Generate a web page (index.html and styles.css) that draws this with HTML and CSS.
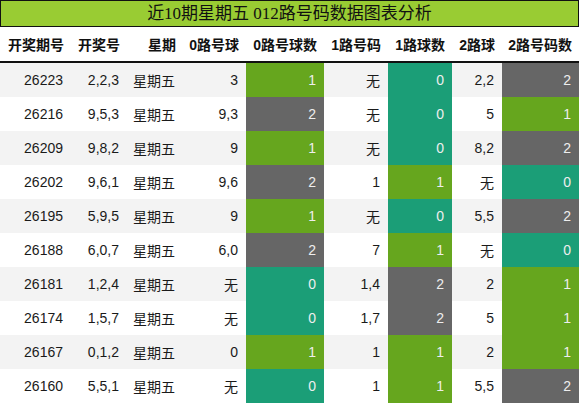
FILE: index.html
```html
<!DOCTYPE html>
<html lang="zh">
<head>
    <meta charset="UTF-8">
    <title>近10期星期五 012路号码数据图表分析</title>
    <link rel="stylesheet" href="styles.css">
</head>
<body>
    <div class="chart">
        <div class="title">近10期星期五 012路号码数据图表分析</div>
        <table class="data">
            <colgroup>
                <col class="w1"><col class="w2"><col class="w3"><col class="w4"><col class="w5">
                <col class="w6"><col class="w7"><col class="w8"><col class="w9">
            </colgroup>
            <thead>
                <tr>
                    <th>开奖期号</th><th>开奖号</th><th>星期</th><th>0路号球</th><th>0路号球数</th>
                    <th>1路号码</th><th>1路球数</th><th>2路球</th><th>2路号码数</th>
                </tr>
            </thead>
            <tbody>
                <tr><td>26223</td><td>2,2,3</td><td>星期五</td><td>3</td><td class="c1">1</td><td>无</td><td class="c0">0</td><td>2,2</td><td class="c2">2</td></tr>
                <tr><td>26216</td><td>9,5,3</td><td>星期五</td><td>9,3</td><td class="c2">2</td><td>无</td><td class="c0">0</td><td>5</td><td class="c1">1</td></tr>
                <tr><td>26209</td><td>9,8,2</td><td>星期五</td><td>9</td><td class="c1">1</td><td>无</td><td class="c0">0</td><td>8,2</td><td class="c2">2</td></tr>
                <tr><td>26202</td><td>9,6,1</td><td>星期五</td><td>9,6</td><td class="c2">2</td><td>1</td><td class="c1">1</td><td>无</td><td class="c0">0</td></tr>
                <tr><td>26195</td><td>5,9,5</td><td>星期五</td><td>9</td><td class="c1">1</td><td>无</td><td class="c0">0</td><td>5,5</td><td class="c2">2</td></tr>
                <tr><td>26188</td><td>6,0,7</td><td>星期五</td><td>6,0</td><td class="c2">2</td><td>7</td><td class="c1">1</td><td>无</td><td class="c0">0</td></tr>
                <tr><td>26181</td><td>1,2,4</td><td>星期五</td><td>无</td><td class="c0">0</td><td>1,4</td><td class="c2">2</td><td>2</td><td class="c1">1</td></tr>
                <tr><td>26174</td><td>1,5,7</td><td>星期五</td><td>无</td><td class="c0">0</td><td>1,7</td><td class="c2">2</td><td>5</td><td class="c1">1</td></tr>
                <tr><td>26167</td><td>0,1,2</td><td>星期五</td><td>0</td><td class="c1">1</td><td>1</td><td class="c1">1</td><td>2</td><td class="c1">1</td></tr>
                <tr><td>26160</td><td>5,5,1</td><td>星期五</td><td>无</td><td class="c0">0</td><td>1</td><td class="c1">1</td><td>5,5</td><td class="c2">2</td></tr>
            </tbody>
        </table>
    </div>
</body>
</html>
```

FILE: styles.css
```css
body {
    margin: 0;
    padding: 0;
    background-color: #fff;
    font-family: "Liberation Sans", "Noto Sans CJK SC", sans-serif;
    color: #1a1a1a;
}
.chart {
    width: 579px;
}
.title {
    height: 25px;
    line-height: 25px;
    background-color: #99cc33;
    border: 1px solid #111;
    text-align: center;
    font-family: "Liberation Serif", "Noto Sans CJK SC", serif;
    font-size: 17px;
    color: #111;
}
.data {
    width: 579px;
    border-collapse: collapse;
    table-layout: fixed;
    font-size: 14px;
}
.w1 { width: 71px; }
.w2 { width: 56px; }
.w3 { width: 56px; }
.w4 { width: 63px; }
.w5 { width: 78px; }
.w6 { width: 64px; }
.w7 { width: 64px; }
.w8 { width: 50px; }
.w9 { width: 77px; }
.data th {
    height: 34px;
    padding: 0 7px 0 0;
    text-align: right;
    font-weight: bold;
    font-size: 14px;
    color: #111;
    border-bottom: 2px solid #111;
    white-space: nowrap;
}
.data td {
    height: 34px;
    padding: 0 8px 0 0;
    text-align: right;
    white-space: nowrap;
}
.data tbody tr:nth-child(odd) {
    background-color: #f3f3f3;
}
.data td.c0 {
    background-color: #1b9e77;
    color: #eeeeee;
}
.data td.c1 {
    background-color: #66a61e;
    color: #eeeeee;
}
.data td.c2 {
    background-color: #666666;
    color: #eeeeee;
}
```
